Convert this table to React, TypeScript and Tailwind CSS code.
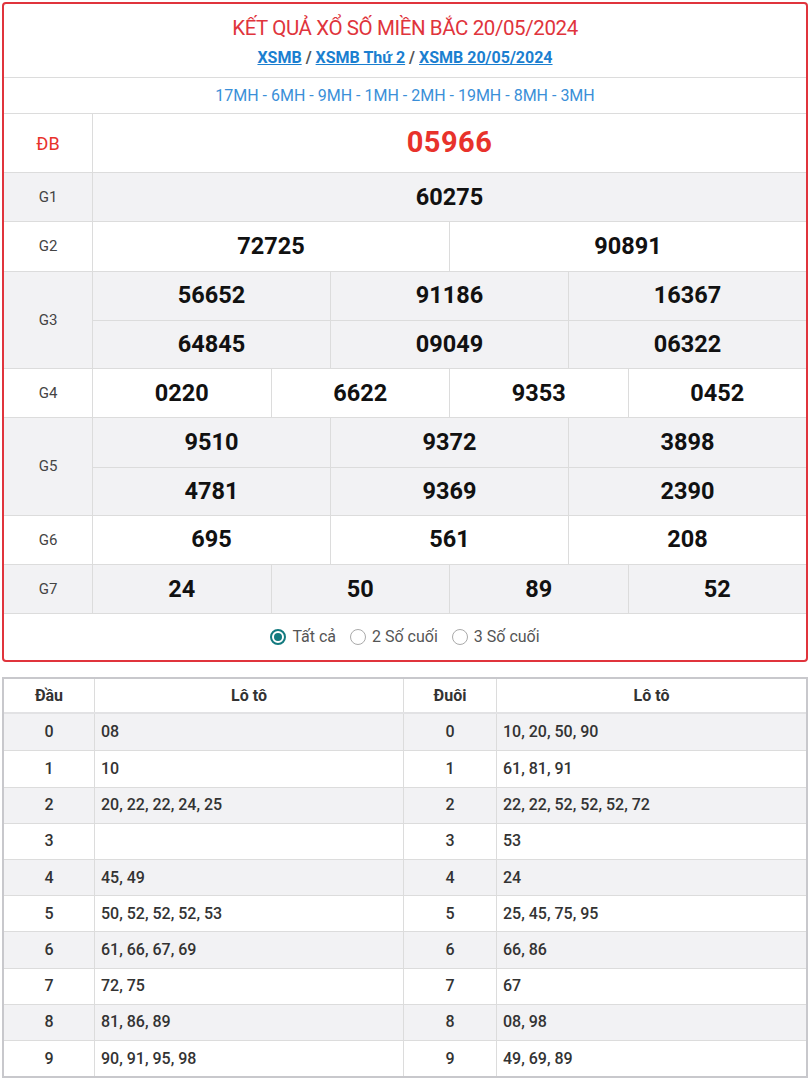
const rows: { label: string; nums: string[][]; gray: boolean }[] = [
  { label: "G1", nums: [["60275"]], gray: true },
  { label: "G2", nums: [["72725", "90891"]], gray: false },
  { label: "G3", nums: [["56652", "91186", "16367"], ["64845", "09049", "06322"]], gray: true },
  { label: "G4", nums: [["0220", "6622", "9353", "0452"]], gray: false },
  { label: "G5", nums: [["9510", "9372", "3898"], ["4781", "9369", "2390"]], gray: true },
  { label: "G6", nums: [["695", "561", "208"]], gray: false },
  { label: "G7", nums: [["24", "50", "89", "52"]], gray: true },
];

const loto: [string, string, string, string][] = [
  ["0", "08", "0", "10, 20, 50, 90"],
  ["1", "10", "1", "61, 81, 91"],
  ["2", "20, 22, 22, 24, 25", "2", "22, 22, 52, 52, 52, 72"],
  ["3", "", "3", "53"],
  ["4", "45, 49", "4", "24"],
  ["5", "50, 52, 52, 52, 53", "5", "25, 45, 75, 95"],
  ["6", "61, 66, 67, 69", "6", "66, 86"],
  ["7", "72, 75", "7", "67"],
  ["8", "81, 86, 89", "8", "08, 98"],
  ["9", "90, 91, 95, 98", "9", "49, 69, 89"],
];

export default function App() {
  return (
    <div className="w-[810px] h-[1082px] bg-white p-[2px] font-['Roboto',sans-serif] text-[#222]">
      {/* Result card */}
      <div className="border-2 border-[#e0343c] rounded-[4px] overflow-hidden">
        <div className="text-center pt-[10px] pb-[9px] border-b border-[#dcdcdc]">
          <h1 className="text-[20.5px] leading-[28px] text-[#e0343c] tracking-[-0.4px]">
            KẾT QUẢ XỔ SỐ MIỀN BẮC 20/05/2024
          </h1>
          <div className="mt-[6px] text-[16px] leading-[20px] font-bold text-[#555]">
            <a className="text-[#1b7fd0] underline">XSMB</a> /{" "}
            <a className="text-[#1b7fd0] underline">XSMB Thứ 2</a> /{" "}
            <a className="text-[#1b7fd0] underline">XSMB 20/05/2024</a>
          </div>
        </div>
        <div className="h-[36px] flex items-center justify-center text-[16px] text-[#3a8fd8] border-b border-[#dcdcdc]">
          17MH - 6MH - 9MH - 1MH - 2MH - 19MH - 8MH - 3MH
        </div>
        {/* ĐB */}
        <div className="flex h-[59px] border-b border-[#dcdcdc]">
          <div className="w-[89px] shrink-0 flex items-center justify-center text-[18px] text-[#e8322b] border-r border-[#dcdcdc]">
            ĐB
          </div>
          <div className="flex-1 flex items-center justify-center text-[29px] font-bold text-[#e8322b] tracking-[0.5px]">
            05966
          </div>
        </div>
        {rows.map((r) => (
          <div
            key={r.label}
            className={`flex border-b border-[#dcdcdc] ${r.gray ? "bg-[#f2f2f4]" : "bg-white"}`}
          >
            <div className="w-[89px] shrink-0 flex items-center justify-center text-[15px] text-[#444] border-r border-[#dcdcdc]">
              {r.label}
            </div>
            <div className="flex-1 flex flex-col">
              {r.nums.map((line, i) => (
                <div
                  key={i}
                  className={`flex h-[48.25px] ${i > 0 ? "border-t border-[#dcdcdc]" : ""}`}
                >
                  {line.map((n, j) => (
                    <div
                      key={j}
                      className={`flex-1 flex items-center justify-center text-[23.5px] font-bold text-[#111] ${
                        j > 0 ? "border-l border-[#dcdcdc]" : ""
                      }`}
                    >
                      {n}
                    </div>
                  ))}
                </div>
              ))}
            </div>
          </div>
        ))}
        <div className="h-[46px] flex items-center justify-center gap-[14px] text-[16px] text-[#555]">
          <label className="flex items-center gap-[6px]">
            <span className="w-[16px] h-[16px] rounded-full border-2 border-[#137a7f] flex items-center justify-center">
              <span className="w-[8px] h-[8px] rounded-full bg-[#137a7f]" />
            </span>
            Tất cả
          </label>
          <label className="flex items-center gap-[6px]">
            <span className="w-[16px] h-[16px] rounded-full border border-[#aaa] bg-white" />
            2 Số cuối
          </label>
          <label className="flex items-center gap-[6px]">
            <span className="w-[16px] h-[16px] rounded-full border border-[#aaa] bg-white" />
            3 Số cuối
          </label>
        </div>
      </div>

      {/* Loto table */}
      <div className="mt-[15px] border-2 border-[#c8c8cc] text-[16px]">
        <div className="flex h-[35px] font-bold text-[#333] border-b-2 border-[#e2e2e4]">
          <div className="w-[91px] flex items-center justify-center border-r border-[#dcdcdc]">Đầu</div>
          <div className="w-[309px] flex items-center justify-center border-r border-[#dcdcdc]">Lô tô</div>
          <div className="w-[93px] flex items-center justify-center border-r border-[#dcdcdc]">Đuôi</div>
          <div className="flex-1 flex items-center justify-center">Lô tô</div>
        </div>
        {loto.map((r, i) => (
          <div
            key={i}
            className={`flex h-[36.2px] font-medium text-[#333] ${i > 0 ? "border-t border-[#dcdcdc]" : ""} ${
              i % 2 === 0 ? "bg-[#f2f2f4]" : "bg-white"
            }`}
          >
            <div className="w-[91px] flex items-center justify-center border-r border-[#dcdcdc]">{r[0]}</div>
            <div className="w-[309px] flex items-center px-[6px] border-r border-[#dcdcdc]">{r[1]}</div>
            <div className="w-[93px] flex items-center justify-center border-r border-[#dcdcdc]">{r[2]}</div>
            <div className="flex-1 flex items-center px-[6px]">{r[3]}</div>
          </div>
        ))}
      </div>
    </div>
  );
}
